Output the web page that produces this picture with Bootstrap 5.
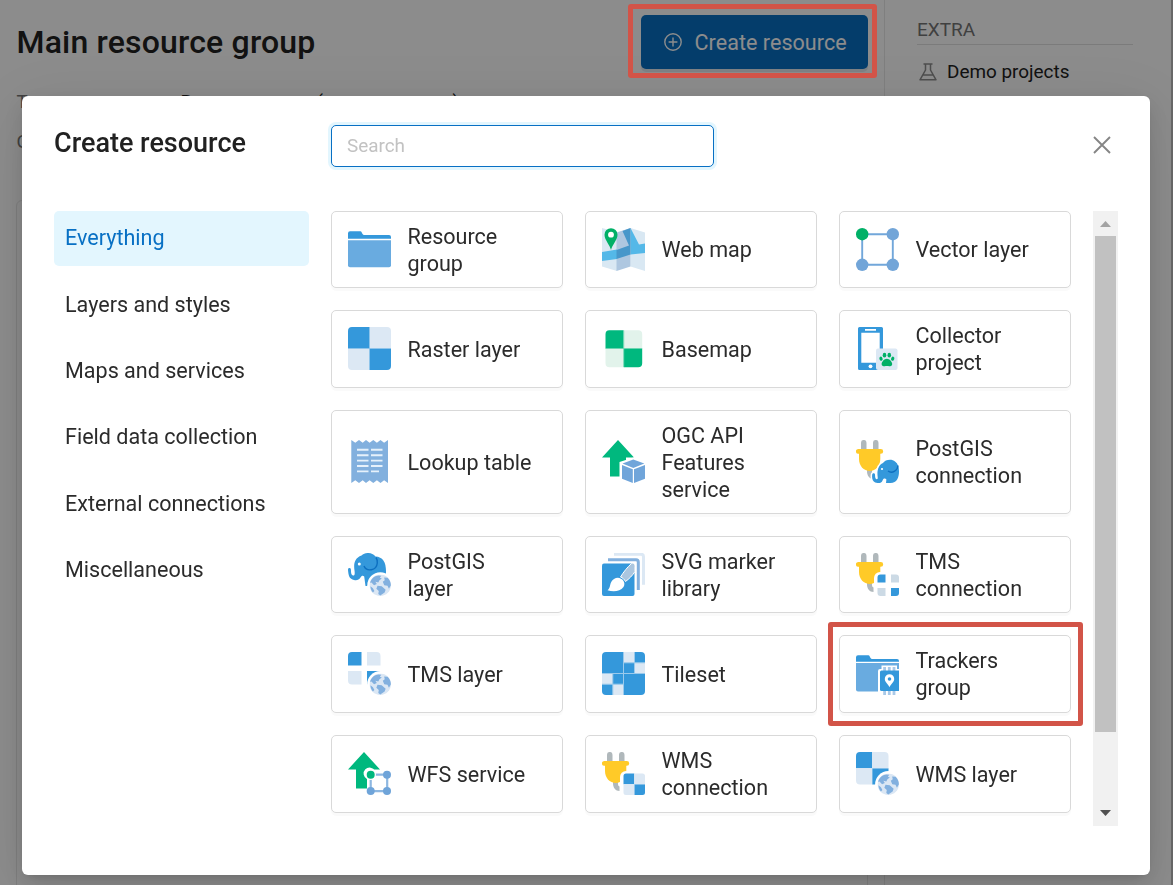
<!DOCTYPE html>
<html lang="en">
<head>
<meta charset="utf-8">
<meta name="viewport" content="width=device-width, initial-scale=1">
<title>Main resource group</title>
<link href="https://cdn.jsdelivr.net/npm/bootstrap@5.3.0/dist/css/bootstrap.min.css" rel="stylesheet">
<style>
  body { font-family: Roboto, sans-serif; color: #212121; font-size: 21.56px; line-height: 27px; height: 885px; overflow: hidden; background: #fff; }
  svg { flex: none; display: block; }
  .page { height: 885px; }
  .page-main { width: 885px; border-right: 1px solid #e8e8e8; padding: 15px 16px 0 16.500px; }
  .page-title { font-size: 32px; font-weight: 500; line-height: 54px; letter-spacing: .18px; margin: 0; }
  .btn-create { background: #0870c4; color: #fff; width: 227px; height: 54px; border-radius: 5px; border: 0; font-size: 21.5px; padding: 0 0 0 23px; gap: 12.5px; box-shadow: 0 3px 0 rgba(5,60,120,.1); letter-spacing: .05px; }
  .btn-create span { padding-top: 2px; }
  .props { font-size: 18.8px; line-height: 40px; margin-top: 12.5px; }
  .props dt { width: 164px; font-weight: 400; color: #757575; }
  .props dd { margin: 0; }
  .panel { border: 1px solid #e8e8e8; border-radius: 6px; height: 700px; margin: 38px 0 0 -1px; }
  .extra { width: 248px; padding: 15px 0 0 32px; font-size: 19px; }
  .extra-title { color: #757575; line-height: 29px; border-bottom: 1px solid #e0e0e0; }
  .extra-item { height: 53px; gap: 10px; padding-left: 2px; font-size: 18.900px; }
  .edge { width: 2px; background: #bdbdbd; }
  .modal-backdrop { --bs-backdrop-opacity: .45; }
  .modal-dialog { max-width: 1128px; margin: 96px 0 0 22px; }
  .modal-content { height: 779px; border: 0; border-radius: 6px; padding: 29px 32px 0; color: #212121; box-shadow: 0 8px 22px rgba(0,0,0,.12), 0 4px 8px -5px rgba(0,0,0,.16), 0 12px 66px 10px rgba(0,0,0,.08); }
  .head { height: 86px; }
  .dialog-title { font-size: 27px; font-weight: 500; line-height: 36px; width: 277px; margin: 0; }
  .search { width: 383px; height: 42px; border: 1px solid #0870c4; border-radius: 5px; font-size: 18.900px; padding: 0 15px 2px; box-shadow: 0 0 0 3px #e3f6fe; }
  .search:focus { border-color: #0870c4; box-shadow: 0 0 0 3px #e3f6fe; }
  .search::placeholder { color: #c2c2c2; }
  .btn-x { margin: 11px 7px 0 0; }
  .cats { width: 255px; gap: 11.4px; margin-right: 22px; }
  .cats .nav-link { height: 55px; line-height: 53px; padding: 0 11px; border-radius: 5px; color: #2b2b2b; }
  .cats .nav-link.active { background: #e3f6fe; color: #0870c4; }
  .cats .nav-link:nth-child(2) { padding-top: .5px; }
  .tiles { width: 740px; display: grid; grid-template: 77px 78px 104px 77px 78px 78px / repeat(3, 232px); gap: 22px; align-content: start; }
  .tile { border: 1px solid #d9d9d9; border-radius: 5px; padding: 0 15.5px; gap: 17px; box-shadow: 0 3px 0 rgba(0,0,0,.02); color: #2b2b2b; position: relative; background: #fff; }
  .tile > svg { margin-bottom: 1px; }
  .scroller { width: 25px; height: 615px; margin-left: 22px; background: #f1f1f1; padding: 10px 2px; }
  .thumb { height: 496px; background: #c1c1c1; margin: 9px 0 78px; }
  .mark-box { position: absolute; border: 5px solid #d25448; border-radius: 3px; z-index: 2000; pointer-events: none; }
  .mark-button { left: 627.500px; top: 4px; width: 249px; height: 74px; }
  .mark-tile { inset: -14px -13px -14px -12px; }
</style>
</head>
<body>
<svg width="0" height="0" class="position-absolute">
  <symbol id="globe" viewBox="0 0 22 22">
    <circle cx="11" cy="11" r="11" fill="#dbe7f4"/>
    <path fill="#82b0df" d="M6 1.8 9 1l3 .2-1.4 2 2 1-2.4 1.6-1.2 2.3L6 7.5l1.5 2.2L4.7 11 2 8.3l-1.5.2C1.5 5.300 3.500 3 6 1.800zM15 3l3.500.300c2 2 3.300 4.500 3.400 7.700l-2 3.500-1.500-3-3.300-.500-1.500-3.500 2-1.500zM8.200 11.500l4.300.500 4 3.500-1 3-4.500 3-2-1.500.500-3-2.500-2.500zM1 12l2.500 2 1.500 3-1.500 1.500C2 17 1 14.500 1 12z"/>
  </symbol>
  <symbol id="plug" viewBox="0 0 43 43">
    <path fill="#b0b8bb" d="M5 10V2.700a2.750 2.750 0 0 1 5.500 0V10zM17 10V2.700a2.750 2.750 0 0 1 5.500 0V10zM11 29v2.500c0 4 2.500 7.500 6.500 7.500v-4.500c-1.200-.3-1.500-1.500-1.500-3V29z"/>
    <path fill="#ffca28" d="M2.300 9h22.500a2.300 2.300 0 0 1 0 4.800h-.5V19c0 7-4.500 12-10.500 12S3 26 3 19v-5.200h-.7a2.300 2.300 0 0 1 0-4.800z"/>
  </symbol>
</svg>

<div class="page d-flex">
  <main class="page-main">
    <div class="d-flex justify-content-between">
      <h1 class="page-title">Main resource group</h1>
      <button class="btn btn-create d-flex align-items-center" type="button">
        <svg width="18" height="18" viewBox="0 0 18 18" fill="none" stroke="#fff" stroke-width="1.400"><circle cx="9" cy="9" r="8.200"/><path d="M9 4.600v8.800M4.600 9h8.800"/></svg>
        <span>Create resource</span>
      </button>
    </div>
    <dl class="props mb-0">
      <div class="d-flex"><dt>Type</dt><dd>Resource group (resource_group)</dd></div>
      <div class="d-flex"><dt>Owner</dt></div>
    </dl>
    <div class="panel"></div>
  </main>
  <aside class="extra">
    <div class="extra-title">EXTRA</div>
    <div class="extra-item d-flex align-items-center">
      <svg width="18" height="18" viewBox="0 0 18 18" fill="none" stroke="#8d8d8d" stroke-width="1.500" stroke-linejoin="round"><path d="M4.500 1h9M6.500 1v6L1 16.800h16L11.500 7V1M4 12h10"/></svg>
      Demo projects
    </div>
  </aside>
  <div class="edge ms-auto"></div>
</div>

<div class="modal-backdrop show"></div>
<div class="modal d-block overflow-hidden" tabindex="-1">
  <div class="modal-dialog">
    <div class="modal-content">
      <div class="head d-flex align-items-start">
        <h2 class="dialog-title">Create resource</h2>
        <input class="form-control search" type="text" placeholder="Search">
        <button class="btn btn-x p-0 border-0 ms-auto" type="button" aria-label="Close">
          <svg width="18" height="18" viewBox="0 0 18 18" stroke="#858585" stroke-width="1.900"><path d="M1 1l16 16M17 1 1 17"/></svg>
        </button>
      </div>
      <div class="d-flex">
        <nav class="cats nav flex-column">
          <a class="nav-link active">Everything</a>
          <a class="nav-link">Layers and styles</a>
          <a class="nav-link">Maps and services</a>
          <a class="nav-link">Field data collection</a>
          <a class="nav-link">External connections</a>
          <a class="nav-link">Miscellaneous</a>
        </nav>
        <div class="tiles">
          <div class="tile d-flex align-items-center">
            <svg width="43" height="43" viewBox="0 0 43 43"><path fill="#3498db" d="M0 10.800V5.300a2 2 0 0 1 2-2h10.500c1.500 0 1.500 3.700 3.500 3.700h25a2 2 0 0 1 2 2v1.800z"/><path fill="#69abe0" d="M0 12.300h43v25a2 2 0 0 1-2 2H2a2 2 0 0 1-2-2z"/></svg>
            <span>Resource<br>group</span>
          </div>
          <div class="tile d-flex align-items-center">
            <svg width="43" height="43" viewBox="0 0 43 43"><path fill="#d9e8f3" d="M0 0l15 4v39L0 38.500zM28.500 0 43 4.500V43l-14.500-4.500z"/><path fill="#aec7e0" d="M14.500 4.500 28.500 0v38.500L14.500 43z"/><path fill="#54b8e8" d="M0 24l15-2.500V31L0 33zM28.500 0l8.500 16.500 6-1V25l-14.500 1.500z"/><path fill="#4797ca" d="M14.500 22 27 17.500 20.500 3l8-3v26.500l-14 4.500z"/><path fill="#00b067" d="M9 22C8 17 2.500 12 2.500 6.700a6.500 6.500 0 0 1 13 0C15.500 12 10 17 9 22z"/><circle cx="9" cy="6.700" r="2.900" fill="#fff"/></svg>
            <span>Web map</span>
          </div>
          <div class="tile d-flex align-items-center">
            <svg width="43" height="43" viewBox="0 0 43 43"><path d="M6.200 6.200h30.600v30.600H6.200z" fill="none" stroke="#72a7da" stroke-width="1.900"/><g fill="#72a5d8"><circle cx="36.800" cy="6.200" r="6.200"/><circle cx="6.200" cy="36.800" r="6.200"/><circle cx="36.800" cy="36.800" r="6.200"/></g><circle cx="6.200" cy="6.200" r="6.200" fill="#00b067"/></svg>
            <span>Vector layer</span>
          </div>

          <div class="tile d-flex align-items-center">
            <svg width="43" height="43" viewBox="0 0 43 43"><path fill="#3498db" d="M4 0h17v21H0V4a4 4 0 0 1 4-4zM22 22h21v17a4 4 0 0 1-4 4H22z"/><path fill="#dce8f4" d="M22 0h17a4 4 0 0 1 4 4v17H22zM0 22h21v21H4a4 4 0 0 1-4-4z"/><path d="M21.500 0v43M0 21.500h43" stroke="#8ec4ea"/></svg>
            <span>Raster layer</span>
          </div>
          <div class="tile d-flex align-items-center">
            <svg width="43" height="43" viewBox="0 0 43 43"><path fill="#00b87e" d="M7.300 3.300h14.200v18h-18V7.300a4 4 0 0 1 3.800-4zM22 21.800h18.200v14.400a4 4 0 0 1-4 4H22z"/><path fill="#e2f3eb" d="M22 3.300h14.200a4 4 0 0 1 4 4v14H22zM3.500 21.800h18v18.400H7.500a4 4 0 0 1-4-4z"/><path d="M21.700 3.500v36.700M3.500 21.500h36.700" stroke="#6bd5b1"/></svg>
            <span>Basemap</span>
          </div>
          <div class="tile d-flex align-items-center">
            <svg width="43" height="43" viewBox="0 0 43 43"><path fill="#3498db" fill-rule="evenodd" d="M3.500 0h22A1.500 1.500 0 0 1 27 1.500v40a1.500 1.500 0 0 1-1.500 1.500h-22A1.500 1.500 0 0 1 2 41.500v-40A1.500 1.500 0 0 1 3.500 0zM5.300 5.800v30h18.400v-30zM9 2v1.800h11V2z"/><circle cx="14.500" cy="39.300" r="1.900" fill="#fff"/><rect x="20" y="21.500" width="21.500" height="21.500" rx="2" fill="#dce8f4"/><g fill="#00b067"><ellipse cx="28.500" cy="28.200" rx="1.800" ry="2.400"/><ellipse cx="33.300" cy="28.200" rx="1.800" ry="2.400"/><ellipse cx="25" cy="31.700" rx="1.600" ry="2.100" transform="rotate(-20 25 31.700)"/><ellipse cx="36.700" cy="31.700" rx="1.600" ry="2.100" transform="rotate(20 36.700 31.700)"/><path d="M30.900 31.700c2.600 0 5.300 3.200 5.300 5.200 0 2.800-2.800 2.200-5.300 2.200s-5.300.6-5.300-2.200c0-2 2.700-5.200 5.300-5.200z"/></g></svg>
            <span>Collector<br>project</span>
          </div>

          <div class="tile d-flex align-items-center">
            <svg width="43" height="43" viewBox="0 0 43 43"><path fill="#82b0de" d="M3.300 0l4 2.800L11 0l3.700 2.800L18 0l3.600 2.800L25.300 0l3.600 2.800L32.500 0l3.600 2.800L40 0v43l-3.900-2.800-3.600 2.800-3.600-2.800-3.600 2.800-3.700-2.800L18 43l-3.300-2.800L11 43l-3.700-2.800-4 2.800z"/><path d="M9 9.800h11.500M23 9.800h11.500M9 15.200h11.500M23 15.200h11.500M9 20.600h11.500M23 20.600h11.500M9 26h11.500M23 26h11.500M9 31.400h11.500M23 31.400h8" stroke="#e6f1fb" stroke-width="1.900"/></svg>
            <span>Lookup table</span>
          </div>
          <div class="tile d-flex align-items-center">
            <svg width="43" height="43" viewBox="0 0 43 43"><path fill="#00b87e" d="M16 0l16 17.500h-8V36.500H8v-19H0z"/><path fill="#fff" d="M31.500 17.500 45 22v21l-13.500 2L17.500 40V22z"/><path fill="#70a5da" d="M31.300 19.500l11 4-11 4.500-10.800-4.500zM20 25l10.800 4.200V43L20 38.700zM43 25v13.700L32 43V29.200z"/></svg>
            <span>OGC API<br>Features<br>service</span>
          </div>
          <div class="tile d-flex align-items-center">
            <svg width="43" height="43" viewBox="0 0 43 43"><use href="#plug" width="43" height="43"/><path stroke="#fff" stroke-width="3" paint-order="stroke" fill="#3498db" d="M17.800 33.200c1.300 0 1.300 1.500 1.300 3s.5 3 1.700 3 1-1 .8-3c-.6-5 .4-11 5.400-13.200 2-3.500 9-4.500 12-1.500 3 2 4 6 4 10 0 6-2 11.500-8.500 11.500h-4.500l.4-3.500c-1-1.500-3-1-3.500.2l-1 2c-1.500 1.600-4.500 1.600-6.700.8-2.600-1.200-3.500-4-3-8 .1-.9.800-1.300 1.600-1.300z"/><path d="M32 31c4 3 9.500 0 10-5.500" fill="none" stroke="#0d6fc0" stroke-width="1.300"/><circle cx="26" cy="29" r="1.100" fill="#fff"/></svg>
            <span>PostGIS<br>connection</span>
          </div>

          <div class="tile d-flex align-items-center">
            <svg width="43" height="43" viewBox="0 0 43 43"><path fill="#3498db" d="M1.500 15c1.500 0 1.500 1.500 1.500 3.500C3 21 4 22.500 5.300 22.500S7 21 6.500 17.500C5.500 11 6.500 5 13.500 2.500 17-1 24-1 27.500 3.500 35 4 38.500 9 38 21l-7 3-9 2-2.500 7h-2l-1.300-9.500c-1-1-2.700-1-3.700 1-1.500 2.700-4 3-6.500 2.500C1.500 26 .5 23 0 17c0-1.500.5-2 1.500-2z"/><path d="M16 13c2.500 6 12.500 5 13.300-3 .2-2-.3-4-1.300-5.500" fill="none" stroke="#0d6fc0" stroke-width="1.400"/><circle cx="11.300" cy="11" r="1.500" fill="#fff"/><circle cx="32.300" cy="32.300" r="13" fill="#fff"/><use href="#globe" x="21.500" y="21.500" width="21.500" height="21.500"/></svg>
            <span>PostGIS<br>layer</span>
          </div>
          <div class="tile d-flex align-items-center">
            <svg width="43" height="43" viewBox="0 0 43 43"><path d="M12 1.200h27a2.500 2.500 0 0 1 2.500 2.500v28" fill="none" stroke="#dce8f4" stroke-width="3"/><path d="M6 6.800h28a2.300 2.300 0 0 1 2.300 2.300v28" fill="none" stroke="#82b0de" stroke-width="3"/><rect y="10.500" width="32.500" height="32.500" rx="2" fill="#3498db"/><path d="M5.500 37.300c3.500-2 1.500-8.300 6.500-11.300 6-4 13 3 9.500 8-3.500 4.800-10.500 4.800-16 3.300z" fill="#fff"/><path d="M18.500 24c3-5 7-10 11-13.500 2-1 3.500.5 3.500 3v5c-2.500 4-6 7.500-9.500 10-1-2-3-4-5-4.500z" fill="#abc6df" stroke="#fff"/></svg>
            <span>SVG marker<br>library</span>
          </div>
          <div class="tile d-flex align-items-center">
            <svg width="43" height="43" viewBox="0 0 43 43"><use href="#plug" width="43" height="43"/><path fill="#fff" d="M18 43V25a6 6 0 0 1 6-6h9v24z"/><path fill="#3498db" d="M24.500 21.500h5v8h-8v-5a3 3 0 0 1 3-3zM35 35h8v5a3 3 0 0 1-3 3h-5z"/><path fill="#ccdae5" d="M35 21.500h5a3 3 0 0 1 3 3v5h-8zM21.500 35h8v8h-5a3 3 0 0 1-3-3z"/></svg>
            <span>TMS<br>connection</span>
          </div>

          <div class="tile d-flex align-items-center">
            <svg width="43" height="43" viewBox="0 0 43 43"><path fill="#3498db" d="M4 0h9.500v13.500H0V4a4 4 0 0 1 4-4zM19 19h13.500v13.500H19z"/><path fill="#dce8f4" d="M19 0h9.500a4 4 0 0 1 4 4v9.500H19zM0 19h13.500v13.500H4a4 4 0 0 1-4-4z"/><circle cx="32.300" cy="32.300" r="13.200" fill="#fff"/><use href="#globe" x="21.500" y="21.500" width="21.500" height="21.500"/></svg>
            <span>TMS layer</span>
          </div>
          <div class="tile d-flex align-items-center">
            <svg width="43" height="43" viewBox="0 0 43 43"><rect width="43" height="43" rx="4" fill="#3498db"/><path fill="#dce8f4" d="M21.500 0h11v10.800h-11zM32.500 10.800H43v10.700H32.500zM0 21.500h10.800v10.700H0zM10.800 32.200h10.700V43H10.800z"/><path stroke="#9bcaec" d="M21.500 0v43M0 21.500h43M32.500 0v21.500M21.500 10.800H43M10.800 21.500V43M0 32.200h21.500" fill="none"/></svg>
            <span>Tileset</span>
          </div>
          <div class="tile d-flex align-items-center">
            <svg width="43" height="43" viewBox="0 0 43 43"><g transform="translate(0 1.400)"><path fill="#3498db" d="M0 8.300V3.800a2 2 0 0 1 2-2h10.500c1.500 0 1.500 3.700 3.500 3.700h25a2 2 0 0 1 2 2v.8z"/><path fill="#69abe0" d="M0 9.500h43V38H2a2 2 0 0 1-2-2z"/><path fill="#fff" d="M22 39V17.500a2 2 0 0 1 2-2h1.500V12H41v3.500h2V39z"/><path stroke="#a9c9e8" stroke-width="2.800" d="M28.600 13.500v28M33.300 13.500v28M38 13.500v28"/><path fill="#3498db" d="M24 18.500a1.500 1.500 0 0 1 1.500-1.500H43v20.500H25.500A1.500 1.500 0 0 1 24 36z"/><path fill="#fff" fill-rule="evenodd" d="M33.500 33.800c-1-3-4.700-5-4.700-8.300a4.700 4.700 0 0 1 9.400 0c0 3.300-3.700 5.300-4.700 8.300zm0-10a1.800 1.800 0 1 0 0 3.600 1.800 1.800 0 0 0 0-3.600z"/></g></svg>
            <span>Trackers<br>group</span>
            <div class="mark-box mark-tile"></div>
          </div>

          <div class="tile d-flex align-items-center">
            <svg width="43" height="43" viewBox="0 0 43 43"><path fill="#00b87e" d="M16 0l16 17.500h-8V36.500H8v-19H0z"/><path fill="#fff" d="M19 43V27a6 6 0 1 1 8-8h16v24z"/><path d="M22.700 22.700h16.500v16.500H22.700z" fill="none" stroke="#8db7e1" stroke-width="2.200"/><g fill="#6fa4d9"><circle cx="39" cy="22.700" r="4"/><circle cx="22.700" cy="39" r="4"/><circle cx="39" cy="39" r="4"/></g><circle cx="22.700" cy="22.700" r="5.300" fill="#fff"/><circle cx="22.700" cy="22.700" r="4" fill="#00b87e"/></svg>
            <span>WFS service</span>
          </div>
          <div class="tile d-flex align-items-center">
            <svg width="43" height="43" viewBox="0 0 43 43"><use href="#plug" width="43" height="43"/><path fill="#fff" d="M18 43V25a6 6 0 0 1 6-6h9v24z"/><path fill="#3498db" d="M24 21.500h8.300v10.800H21.500V24a2.500 2.500 0 0 1 2.500-2.500zM32.300 32.300H43v8.200a2.500 2.500 0 0 1-2.500 2.500h-8.200z"/><path fill="#dce8f4" d="M32.300 21.500h8.200A2.500 2.500 0 0 1 43 24v8.300H32.300zM21.500 32.300h10.800V43H24a2.500 2.500 0 0 1-2.500-2.500z"/></svg>
            <span>WMS<br>connection</span>
          </div>
          <div class="tile d-flex align-items-center">
            <svg width="43" height="43" viewBox="0 0 43 43"><path fill="#3498db" d="M4 0h12.200v16.200H0V4a4 4 0 0 1 4-4zM16.200 16.200h16.300v16.300H16.200z"/><path fill="#dce8f4" d="M16.200 0h12.300a4 4 0 0 1 4 4v12.200H16.200zM0 16.200h16.200v16.300H4a4 4 0 0 1-4-4z"/><circle cx="32.300" cy="32.300" r="13.200" fill="#fff"/><use href="#globe" x="21.500" y="21.500" width="21.500" height="21.500"/></svg>
            <span>WMS layer</span>
          </div>
        </div>
        <div class="scroller">
          <svg width="21" height="6" viewBox="0 0 21 6"><path d="M5 6h11L10.500 0z" fill="#a3a3a3"/></svg>
          <div class="thumb"></div>
          <svg width="21" height="6" viewBox="0 0 21 6"><path d="M5 0h11l-5.500 6z" fill="#505050"/></svg>
        </div>
      </div>
    </div>
  </div>
</div>
<div class="mark-box mark-button"></div>
<script src="https://cdn.jsdelivr.net/npm/bootstrap@5.3.0/dist/js/bootstrap.bundle.min.js"></script>
</body>
</html>
